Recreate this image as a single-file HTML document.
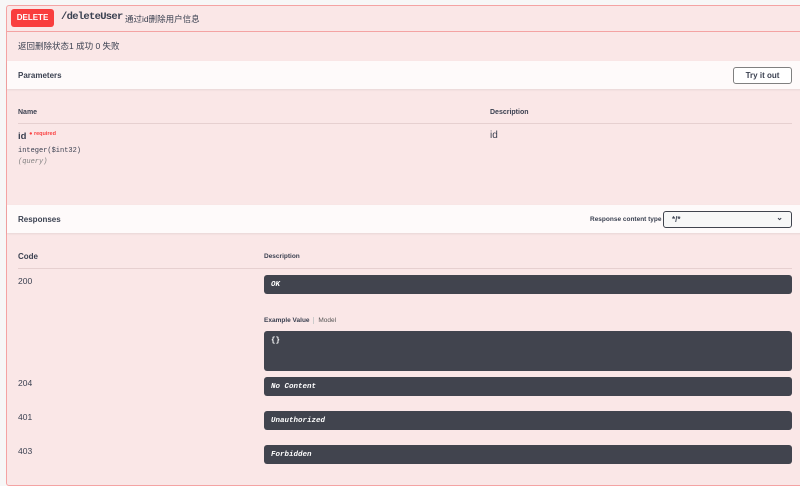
<!DOCTYPE html>
<html><head><meta charset="utf-8"><style>
*{box-sizing:border-box;margin:0;padding:0}
body{width:800px;height:486px;background:#f7f7f7;font-family:"Liberation Sans","Noto Sans CJK SC",sans-serif;color:#3b4151;position:relative;overflow:hidden}
.box{position:absolute;left:6px;top:5px;width:810px;height:481px;background:#fae7e7;border:1px solid #f4a3a3;border-radius:3px}
.a{position:absolute;white-space:nowrap}
.bar{position:absolute;left:7px;width:800px;background:rgba(255,255,255,.8);box-shadow:0 1px 2px rgba(0,0,0,.08)}
.mono{font-family:"Liberation Mono",monospace}
.dk{position:absolute;left:264px;width:528px;background:#41444e;border-radius:3px;color:#fff;font-family:"Liberation Mono",monospace;font-size:7.5px;font-weight:bold;font-style:italic;padding-left:7px;padding-top:7px;line-height:1}
.c{text-align:center;line-height:1}
.line{position:absolute;height:1px;background:#e6d0d0}
</style></head><body>
<div class="box"></div>
<div class="line" style="left:7px;top:31px;width:800px;background:#f4a3a3"></div>
<div class="a c" style="left:11px;top:9px;width:43px;height:18px;background:#f93e3e;border-radius:3px;color:#fff;font-weight:bold;font-size:8px;padding-top:5px">DELETE</div>
<div class="a mono" style="left:61px;top:11px;font-size:10.5px;letter-spacing:-0.7px;font-weight:bold;color:#3b4151">/deleteUser</div>
<div class="a" style="left:125px;top:13px;font-size:8.5px">通过id删除用户信息</div>
<div class="a" style="left:18px;top:40px;font-size:8.5px">返回删除状态1 成功 0 失败</div>
<div class="bar" style="top:61px;height:28px"></div>
<div class="a" style="left:18px;top:71px;font-size:8px;font-weight:bold">Parameters</div>
<div class="a c" style="left:733px;top:67px;width:59px;height:17px;border:1.5px solid #808080;border-radius:3px;font-size:8px;font-weight:bold;background:#fff;padding-top:4px">Try it out</div>
<div class="a" style="left:18px;top:109px;font-size:7px;font-weight:bold">Name</div>
<div class="a" style="left:490px;top:109px;font-size:7px;font-weight:bold">Description</div>
<div class="line" style="left:18px;top:123px;width:774px"></div>
<div class="a" style="left:18px;top:131px;font-size:9.5px;font-weight:bold">id <span style="color:#f93e3e;font-size:5.5px;vertical-align:4px">● required</span></div>
<div class="a mono" style="left:18px;top:147px;font-size:7px">integer($int32)</div>
<div class="a mono" style="left:18px;top:158px;font-size:7px;font-style:italic;color:#808080">(query)</div>
<div class="a" style="left:490px;top:130px;font-size:10px">id</div>
<div class="bar" style="top:205px;height:28px"></div>
<div class="a" style="left:18px;top:215px;font-size:8px;font-weight:bold">Responses</div>
<div class="a" style="left:590px;top:216px;font-size:6.5px;font-weight:bold">Response content type</div>
<div class="a" style="left:663px;top:211px;width:129px;height:17px;border:1.5px solid #41444e;border-radius:3px;background:#f7f7f7;font-size:8px;font-weight:bold;padding-left:8px;padding-top:4px;line-height:1">*/*<span style="position:absolute;right:8px;top:2px;font-size:8px">⌄</span></div>
<div class="a" style="left:18px;top:252px;font-size:8px;font-weight:bold">Code</div>
<div class="a" style="left:264px;top:253px;font-size:6.5px;font-weight:bold">Description</div>
<div class="line" style="left:18px;top:268px;width:774px"></div>
<div class="a" style="left:18px;top:276px;font-size:8.5px">200</div>
<div class="dk" style="top:275px;height:19px">OK</div>
<div class="a" style="left:264px;top:317px;font-size:6.5px"><b>Example Value</b> <span style="border-left:1px solid #ccc;padding-left:4px;margin-left:2px;color:#555">Model</span></div>
<div class="dk" style="top:331px;height:40px;font-style:normal">{}</div>
<div class="a" style="left:18px;top:378px;font-size:8.5px">204</div>
<div class="dk" style="top:377px;height:19px">No Content</div>
<div class="a" style="left:18px;top:412px;font-size:8.5px">401</div>
<div class="dk" style="top:411px;height:19px">Unauthorized</div>
<div class="a" style="left:18px;top:446px;font-size:8.5px">403</div>
<div class="dk" style="top:445px;height:19px">Forbidden</div>
</body></html>
